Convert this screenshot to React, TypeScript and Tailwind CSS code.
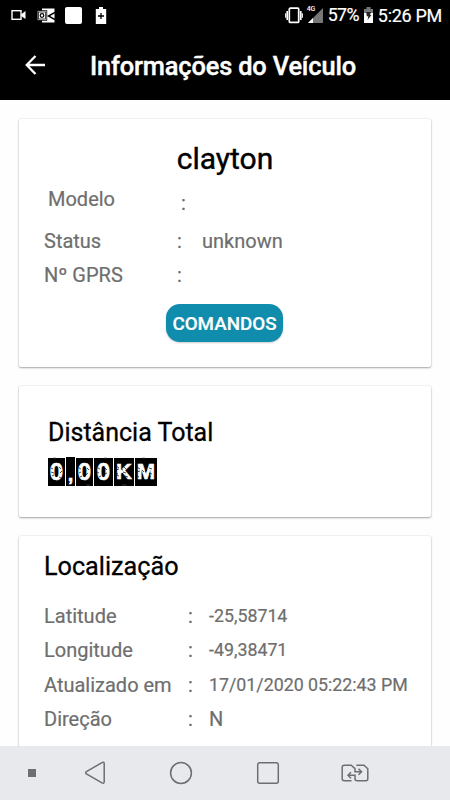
import type { ReactNode } from "react";

const location = [
  { label: "Latitude", value: "-25,58714" },
  { label: "Longitude", value: "-49,38471" },
  { label: "Atualizado em", value: "17/01/2020 05:22:43 PM" },
  { label: "Direção", value: "N" },
];

const digits = [
  { char: "0", tile: "w-[17px] h-7", glyph: "text-[24px]" },
  { char: ",", tile: "w-[9px] h-[29px]", glyph: "pt-[5px] text-[20px]" },
  { char: "0", tile: "w-[17px] h-7", glyph: "text-[24px]" },
  { char: "0", tile: "w-[19px] h-7", glyph: "text-[24px]" },
  { char: "K", tile: "w-5 h-7", glyph: "text-[22px]" },
  { char: "M", tile: "w-[22px] h-7", glyph: "text-[22px]" },
];

function Card({ className, children }: { className: string; children: ReactNode }) {
  return (
    <section
      className={`mx-[19px] shrink-0 rounded-[2px] bg-white shadow-[0_1px_2px_rgba(0,0,0,0.32),0_0_2px_rgba(0,0,0,0.14)] ${className}`}
    >
      {children}
    </section>
  );
}

function StatusBar() {
  return (
    <div className="flex h-[31px] items-center justify-between pl-[11px] pr-2 text-white">
      <div className="-mt-px flex items-center">
        <svg className="h-[12px] w-[15px]" viewBox="0 0 15 12" fill="none">
          <rect x="1" y="1.7" width="9" height="8.6" stroke="currentColor" strokeWidth="1.4" />
          <path d="M10 5.5 14.5 2v8L10 7z" fill="currentColor" />
        </svg>
        <svg className="ml-[11px] h-[15px] w-[18px]" viewBox="0 0 18 15" fill="none">
          <path d="M5 .5h12.5v14H5z" fill="currentColor" />
          <path d="M18 4.5 11.5 8l6.5 3.5" stroke="#000" strokeWidth="1.5" />
          <rect x=".2" y="2.7" width="9.6" height="9.6" fill="#fff" stroke="#000" strokeWidth=".8" />
          <rect x="1.4" y="4" width="7.2" height="7" stroke="#000" strokeWidth=".7" />
          <circle cx="5" cy="7.5" r="1.8" stroke="#000" strokeWidth="1.2" />
        </svg>
        <div className="ml-[10px] h-[17px] w-[17px] rounded-[2px] bg-white" />
        <svg className="ml-[13px] h-[17px] w-3" viewBox="0 0 12 17" fill="none">
          <path d="M4 0h4v2h3.2v15H.8V2H4z" fill="currentColor" />
          <path d="M3 9h6M6 6v6" stroke="#000" strokeWidth="1.3" />
        </svg>
      </div>

      <div className="flex items-center">
        <svg className="h-[17px] w-[18px]" viewBox="0 0 18 17" fill="none" stroke="currentColor">
          <rect x="4.3" y="1.2" width="9.4" height="14.2" rx="1" strokeWidth="1.7" />
          <path d="M2.2 4v9M15.8 4v9" strokeWidth="1.6" />
          <path d="M.7 6.3v4.4M17.3 6.3v4.4" strokeWidth="1.2" />
        </svg>
        <div className="relative ml-[4px] h-[17px] w-4">
          <svg className="h-[17px] w-4" viewBox="0 0 16 17">
            <path d="M16 1v15H1z" fill="#777" />
            <path d="M6 11v5H1z" fill="#fff" />
          </svg>
          <span className="absolute -top-px left-0 bg-black text-[7px] font-medium leading-[6px]">4G</span>
        </div>
        <span className="ml-[5px] text-[17.8px] tracking-[-0.6px] [-webkit-text-stroke:0.2px]">57%</span>
        <svg className="ml-[4px] h-[17px] w-[11px]" viewBox="0 0 11 17">
          <path d="M3.5 0h4v2H10v4H1V2h2.5z" fill="#777" />
          <path d="M1 6h9v10H1z" fill="#fff" />
          <path d="M3.2 5H8L7 8h1.5l-4 5 .8-3.8H3.8z" fill="#222" />
        </svg>
        <span className="ml-[4px] text-[18px] tracking-[-0.3px] [-webkit-text-stroke:0.2px]">5:26 PM</span>
      </div>
    </div>
  );
}

function OdometerDisplay() {
  return (
    <div className="relative ml-[29px] mt-[9px] flex h-[29px] w-[109px] items-center gap-px font-['Liberation_Sans',sans-serif] font-bold leading-none text-white">
      {digits.map((digit, i) => (
        <span
          key={i}
          className={`flex shrink-0 items-center justify-center bg-black [-webkit-text-stroke:0.6px_white] ${digit.tile} ${digit.glyph}`}
        >
          {digit.char}
        </span>
      ))}
      {/* worn print on the plates */}
      <svg className="absolute inset-0 h-[29px] w-[109px]" viewBox="0 0 109 29" fill="none">
        <g stroke="#000" strokeWidth=".7">
          <path d="M3 11l2 1M3 15l3 1M11 10l2 2M12 16l2-2M4 19l2-1M11 20l2 1M31 11l2 1M31 16l2-1M39 11l2 2M38 18l2-2M32 20l2-1M50 11l2 1M49 15l2 1M57 11l2 2M57 17l2-1M51 20l2-1" />
          <path d="M68 9l3 2M68 13l3-1M69 18l2 1M68 16l2 1M76 10l2 2M75 15l3 1M73 12l2 1M77 19l3 1M89 10l3 2M89 15l3-1M89 19l2 1M94 13l2 2M97 15l2-2M101 11l3 1M101 16l3 1M101 20l2-1" />
        </g>
        <path d="M5 1h3M38 28h4M56 1h3M74 28h5M94 1h3" stroke="#555" strokeWidth=".6" />
      </svg>
    </div>
  );
}

function NavigationBar() {
  return (
    <nav className="flex h-[54px] shrink-0 items-center bg-[#e8e9ed] pl-7 text-[#6d6e72]">
      <div className="h-2 w-2 bg-[#6d6e72]" />
      <svg className="ml-[49px] h-6 w-[21px]" viewBox="0 0 21 24" fill="none" stroke="currentColor" strokeWidth="1.5">
        <path d="M1.4 10.7 17 1.6q2.2-1.1 2.2 1v18.1q0 2.2-2.2 1.1L1.4 12.9q-1.4-1.1 0-2.2z" />
      </svg>
      <svg className="ml-[63px] h-6 w-6" viewBox="0 0 24 24" fill="none" stroke="currentColor" strokeWidth="1.5">
        <circle cx="12" cy="12" r="10.4" />
      </svg>
      <svg className="ml-[63px] h-6 w-6" viewBox="0 0 24 24" fill="none" stroke="currentColor" strokeWidth="1.5">
        <rect x="1.7" y="1.7" width="20.6" height="20.6" rx="2" />
      </svg>
      <svg className="ml-[61px] h-[18px] w-7" viewBox="0 0 28 18" fill="none" stroke="currentColor" strokeWidth="1.5">
        <path d="M10.5 16.7H3.2q-2 0-2-2V3.3q0-2 2-2h7L14 4.7v3.1h6.5M17.5 4.8l3.1 3-3.1 3" />
        <path d="M15.3 1.3H23l3.8 3.5v9.9q0 2-2 2h-8.5q-2.3 0-2.3-2v-3.5H7.2M10 8.2l-3 3 3 3" />
      </svg>
    </nav>
  );
}

export default function App() {
  return (
    <main className="flex h-[800px] w-[450px] flex-col overflow-hidden bg-[#fefefe] font-[Roboto,sans-serif] text-black">
      <header className="h-[100px] shrink-0 bg-black text-white">
        <StatusBar />
        <div className="flex h-[69px] items-center pl-[25px]">
          <svg className="-mt-px h-5 w-5" viewBox="0 0 20 20" fill="none" stroke="currentColor" strokeWidth="2.3">
            <path d="M20 10H2M10.5 1 1.7 10l8.8 9" />
          </svg>
          <h1 className="ml-[45px] mt-0.5 text-[25.4px] font-medium leading-none tracking-[-0.16px] [-webkit-text-stroke:0.4px]">
            Informações do Veículo
          </h1>
        </div>
      </header>

      <div className="flex min-h-0 flex-1 flex-col gap-[19px] overflow-hidden pt-[19px]">
        <Card className="h-[248px] text-xl text-[#6e6e6e] [-webkit-text-stroke:0.2px]">
          <h2 className="pt-[22px] text-center text-[30px] leading-9 text-black [-webkit-text-stroke:0.4px]">clayton</h2>
          <div className="mt-[10px] flex h-6 items-center pl-[29px] leading-6">
            <span className="w-[133px]">Modelo</span>
            <span className="pt-[7px]">:</span>
          </div>
          <div className="mt-[18px] flex h-6 items-center pl-[25px] leading-6">
            <span className="w-[133px]">Status</span>
            <span className="w-[25px]">:</span>
            <span>unknown</span>
          </div>
          <div className="mt-[10px] flex h-6 items-center pl-[25px] leading-6">
            <span className="w-[133px]">Nº GPRS</span>
            <span>:</span>
          </div>
          <button className="ml-[147px] mt-[17px] block h-[38px] w-[117px] rounded-[14px] bg-[#108cac] pt-0.5 text-[18.8px] font-medium text-white shadow-[0_1px_2px_rgba(0,0,0,0.2)]">
            COMANDOS
          </button>
        </Card>

        <Card className="h-[131px]">
          <h2 className="pl-[29px] pt-[32px] text-[25px] leading-[30px] [-webkit-text-stroke:0.3px]">Distância Total</h2>
          <OdometerDisplay />
        </Card>

        <Card className="h-[280px] text-[#6e6e6e] [-webkit-text-stroke:0.2px]">
          <h2 className="pl-[25px] pt-[16px] text-[25.2px] leading-[30px] text-black [-webkit-text-stroke:0.3px]">
            Localização
          </h2>
          <div className="mt-[17px]">
            {location.map((item) => (
              <div key={item.label} className="flex h-[34.3px] items-center pl-[25px] text-xl">
                <span className="w-[144px]">{item.label}</span>
                <span className="w-[21px]">:</span>
                <span className={item.label === "Direção" ? "text-xl" : "pt-px text-[17.8px]"}>{item.value}</span>
              </div>
            ))}
            <div className="mt-[1.5px] flex h-[34.3px] items-center pl-[25px] text-xl">
              <span className="w-[144px]">Odômetro</span>
            </div>
          </div>
        </Card>
      </div>

      <NavigationBar />
    </main>
  );
}
